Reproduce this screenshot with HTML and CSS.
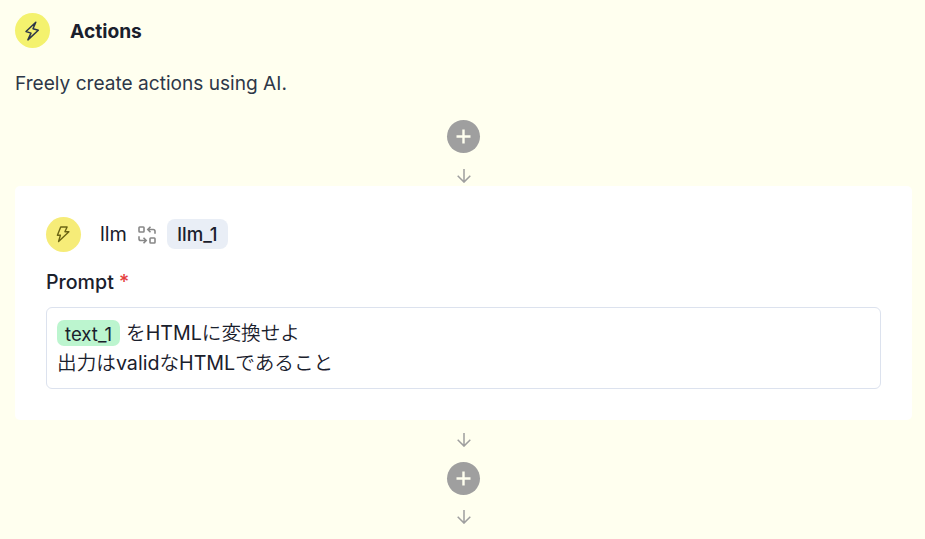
FILE: index.html
```html
<!DOCTYPE html>
<html lang="en">
<head>
    <meta charset="UTF-8">
    <meta name="viewport" content="width=device-width, initial-scale=1.0">
    <title>Actions</title>
    <link rel="stylesheet" href="styles.css">
</head>
<body>
    <div class="actions">
        <div class="actions-header">
            <span class="icon-circle">
                <svg width="20" height="20" viewBox="0 0 20 20"><path d="M12.8 1.2 3 10.5 8 12.1 4.9 18.9 15.3 9.3 10 7.8Z"/></svg>
            </span>
            <h2>Actions</h2>
        </div>
        <p class="description">Freely create actions using AI.</p>

        <div class="flow-top">
            <button type="button" class="add-button" aria-label="Add">
                <svg width="15" height="15" viewBox="0 0 15 15"><path d="M7.5 .5v14M.5 7.5h14"/></svg>
            </button>
            <svg class="arrow" width="14" height="14" viewBox="0 0 14 14"><path d="M7 0v13M.7 6.8 7 13.1l6.3-6.3"/></svg>
        </div>

        <div class="card">
            <div class="card-header">
                <span class="icon-circle llm-icon">
                    <svg width="18" height="18" viewBox="0 0 18 18"><path d="M5.7 1h6.4L9.9 5.7h4L3.6 15.4 5.4 9.2H2.4Z"/></svg>
                </span>
                <span class="card-name">llm</span>
                <svg class="swap-icon" width="18" height="18" viewBox="0 0 18 18">
                    <rect x="1" y="1" width="5" height="5" rx=".7"/>
                    <rect x="12" y="12" width="5" height="5" rx=".7"/>
                    <path d="M12.5 .8 9.8 3.5l2.7 2.7M10 3.5h5.2q1.8 0 1.8 1.8v2.4"/>
                    <path d="M5.5 11.8l2.7 2.7-2.7 2.7M8 14.5H2.8Q1 14.5 1 12.7v-2.4"/>
                </svg>
                <span class="card-id">llm_1</span>
            </div>
            <label class="prompt-label">Prompt <span class="required">*</span></label>
            <div class="prompt-box" lang="ja">
                <div class="line"><span class="variable">text_1</span>をHTMLに変換せよ</div>
                <div class="line">出力はvalidなHTMLであること</div>
            </div>
        </div>

        <div class="flow-bottom">
            <svg class="arrow" width="14" height="14" viewBox="0 0 14 14"><path d="M7 0v13M.7 6.8 7 13.1l6.3-6.3"/></svg>
            <button type="button" class="add-button" aria-label="Add">
                <svg width="15" height="15" viewBox="0 0 15 15"><path d="M7.5 .5v14M.5 7.5h14"/></svg>
            </button>
            <svg class="arrow" width="14" height="14" viewBox="0 0 14 14"><path d="M7 0v13M.7 6.8 7 13.1l6.3-6.3"/></svg>
        </div>
    </div>
</body>
</html>
```
FILE: styles.css
```css
* {
    box-sizing: border-box;
}

body {
    font-family: Inter, "Noto Sans CJK JP DemiLight", "Noto Sans CJK JP", sans-serif;
    font-size: 19.65px;
    line-height: 30px;
    margin: 0;
    height: 539px;
    overflow: hidden;
    color: #1a202c;
    background-color: #ffffef;
}

svg {
    display: block;
    fill: none;
    stroke: currentColor;
    flex-shrink: 0;
}

.actions {
    padding: 13px 13px 0 15px;
}

.actions-header {
    display: flex;
    align-items: center;
    gap: 20px;
    height: 35px;
}

.icon-circle {
    display: flex;
    align-items: center;
    justify-content: center;
    width: 35px;
    height: 35px;
    border-radius: 50%;
    background-color: #f4f26e;
    color: #2d3748;
    stroke-width: 1.5;
    stroke-linejoin: round;
}

.actions-header h2 {
    margin: 0;
    padding-top: 1px;
    font-size: 19.2px;
    font-weight: 700;
}

.description {
    margin: 20px 0 0;
    font-size: 19.1px;
    color: #2d3748;
}

.flow-top,
.flow-bottom {
    display: flex;
    flex-direction: column;
    align-items: center;
    color: #9f9f9f;
}

.flow-top {
    gap: 16px;
    height: 88px;
    padding-top: 22px;
}

.flow-bottom {
    gap: 15px;
    padding-top: 13px;
}

.add-button {
    display: flex;
    align-items: center;
    justify-content: center;
    width: 33px;
    height: 33px;
    padding: 0;
    border: none;
    border-radius: 50%;
    background-color: #9f9f9f;
    color: #ffffef;
    stroke-width: 2.4;
}

.arrow {
    stroke-width: 1.5;
}

.card {
    height: 234px;
    padding: 31px;
    border-radius: 5px;
    background-color: #fff;
}

.card-header {
    display: flex;
    align-items: center;
    height: 35px;
}

.llm-icon {
    background-color: #f6ec78;
    color: #6b6413;
    stroke-width: 1.4;
}

.card-name {
    margin-left: 19px;
    padding-bottom: 1px;
    font-size: 19.8px;
}

.swap-icon {
    margin: 0 11px;
    color: #888;
    stroke-width: 1.6;
}

.card-id {
    width: 61px;
    height: 30px;
    margin-bottom: 1px;
    border-radius: 8px;
    line-height: 31px;
    text-align: center;
    font-size: 18.6px;
    font-weight: 500;
    background-color: #e9eef6;
}

.prompt-label {
    display: block;
    margin-top: 15px;
    font-size: 19.6px;
    font-weight: 500;
}

.required {
    color: #e53e3e;
}

.prompt-box {
    height: 82px;
    margin-top: 10px;
    padding: 10px;
    border: 1px solid #dce2ee;
    border-radius: 6px;
}

.line {
    display: flex;
    align-items: center;
    height: 30px;
}

.variable {
    width: 63px;
    height: 26px;
    margin-right: 6px;
    border-radius: 7px;
    line-height: 28px;
    text-align: center;
    font-size: 18.6px;
    background-color: #bcf5cf;
}
```
